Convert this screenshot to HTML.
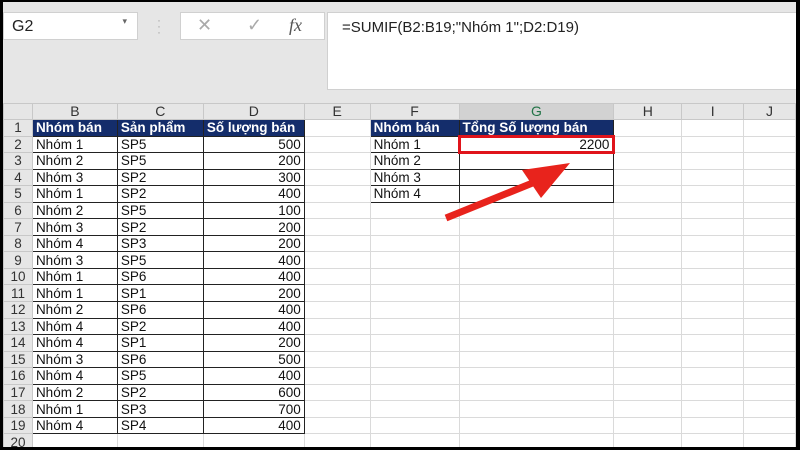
<!DOCTYPE html>
<html><head><meta charset="utf-8"><style>
*{margin:0;padding:0;box-sizing:border-box}
body{width:800px;height:450px;background:#000;position:relative;overflow:hidden;font-family:"Liberation Sans",Arial,sans-serif}
#wrap{position:absolute;left:3px;top:2px;width:793px;height:445px;background:#e6e6e6;overflow:hidden}
.box{position:absolute;background:#fff;border:1px solid #d0d0d0}
table{position:absolute;left:0;top:101px;border-collapse:collapse;table-layout:fixed;background:#fff}
tr{height:16.55px}
td{border:1px solid #dadada;font-size:13.5px;padding:0 3px;white-space:nowrap;overflow:hidden;line-height:13px;color:#111}
tr.h{height:16px}
tr.h td{background:#e6e6e6;text-align:center;color:#333;font-size:14px;border-color:#c8c8c8}
td.rh{background:#e6e6e6;text-align:center;color:#333;font-size:13.5px;padding:0;border-color:#c8c8c8}
td.hd{background:#142d6b;color:#fff;font-weight:bold;border:1px solid #222}
td.d{border:1px solid #222}
td.n{text-align:right}
</style></head><body><div id="wrap">
<div class="box" style="left:0;top:10px;width:135px;height:28px;font-size:16px;padding:5px 8px;color:#222">G2<span style="position:absolute;right:10px;top:3px;font-size:9px;color:#666">▾</span></div>
<div style="position:absolute;left:154px;top:15px;color:#aaa;font-size:12px;line-height:6px">·<br>·<br>·</div>
<div class="box" style="left:177px;top:10px;width:145px;height:28px;color:#aaa;font-size:18px">
<span style="position:absolute;left:16px;top:2px">✕</span><span style="position:absolute;left:66px;top:2px">✓</span><span style="position:absolute;left:108px;top:2px;font-family:'Liberation Serif',serif;font-style:italic;color:#555">fx</span></div>
<div class="box" style="left:324px;top:10px;width:470px;height:78px;font-size:15px;padding:6px 14px;color:#222">=SUMIF(B2:B19;"Nhóm 1";D2:D19)</div>
<table>
<colgroup><col style="width:29px"><col style="width:85px"><col style="width:86px"><col style="width:101px"><col style="width:66px"><col style="width:89px"><col style="width:155px"><col style="width:68px"><col style="width:62px"><col style="width:52px"></colgroup>
<tr class="h"><td></td><td>B</td><td>C</td><td>D</td><td>E</td><td>F</td><td style="background:#d2d2d2;color:#217346">G</td><td>H</td><td>I</td><td>J</td></tr>
<tr><td class="rh">1</td><td class="hd">Nhóm bán</td><td class="hd">Sản phẩm</td><td class="hd">Số lượng bán</td><td></td><td class="hd">Nhóm bán</td><td class="hd">Tổng Số lượng bán</td><td></td><td></td><td></td></tr>
<tr><td class="rh">2</td><td class="d">Nhóm 1</td><td class="d">SP5</td><td class="d n">500</td><td></td><td class="d">Nhóm 1</td><td class="d n" style="border:3px solid #e0141b">2200</td><td></td><td></td><td></td></tr>
<tr><td class="rh">3</td><td class="d">Nhóm 2</td><td class="d">SP5</td><td class="d n">200</td><td></td><td class="d">Nhóm 2</td><td class="d"></td><td></td><td></td><td></td></tr>
<tr><td class="rh">4</td><td class="d">Nhóm 3</td><td class="d">SP2</td><td class="d n">300</td><td></td><td class="d">Nhóm 3</td><td class="d"></td><td></td><td></td><td></td></tr>
<tr><td class="rh">5</td><td class="d">Nhóm 1</td><td class="d">SP2</td><td class="d n">400</td><td></td><td class="d">Nhóm 4</td><td class="d"></td><td></td><td></td><td></td></tr>
<tr><td class="rh">6</td><td class="d">Nhóm 2</td><td class="d">SP5</td><td class="d n">100</td><td></td><td></td><td></td><td></td><td></td><td></td></tr>
<tr><td class="rh">7</td><td class="d">Nhóm 3</td><td class="d">SP2</td><td class="d n">200</td><td></td><td></td><td></td><td></td><td></td><td></td></tr>
<tr><td class="rh">8</td><td class="d">Nhóm 4</td><td class="d">SP3</td><td class="d n">200</td><td></td><td></td><td></td><td></td><td></td><td></td></tr>
<tr><td class="rh">9</td><td class="d">Nhóm 3</td><td class="d">SP5</td><td class="d n">400</td><td></td><td></td><td></td><td></td><td></td><td></td></tr>
<tr><td class="rh">10</td><td class="d">Nhóm 1</td><td class="d">SP6</td><td class="d n">400</td><td></td><td></td><td></td><td></td><td></td><td></td></tr>
<tr><td class="rh">11</td><td class="d">Nhóm 1</td><td class="d">SP1</td><td class="d n">200</td><td></td><td></td><td></td><td></td><td></td><td></td></tr>
<tr><td class="rh">12</td><td class="d">Nhóm 2</td><td class="d">SP6</td><td class="d n">400</td><td></td><td></td><td></td><td></td><td></td><td></td></tr>
<tr><td class="rh">13</td><td class="d">Nhóm 4</td><td class="d">SP2</td><td class="d n">400</td><td></td><td></td><td></td><td></td><td></td><td></td></tr>
<tr><td class="rh">14</td><td class="d">Nhóm 4</td><td class="d">SP1</td><td class="d n">200</td><td></td><td></td><td></td><td></td><td></td><td></td></tr>
<tr><td class="rh">15</td><td class="d">Nhóm 3</td><td class="d">SP6</td><td class="d n">500</td><td></td><td></td><td></td><td></td><td></td><td></td></tr>
<tr><td class="rh">16</td><td class="d">Nhóm 4</td><td class="d">SP5</td><td class="d n">400</td><td></td><td></td><td></td><td></td><td></td><td></td></tr>
<tr><td class="rh">17</td><td class="d">Nhóm 2</td><td class="d">SP2</td><td class="d n">600</td><td></td><td></td><td></td><td></td><td></td><td></td></tr>
<tr><td class="rh">18</td><td class="d">Nhóm 1</td><td class="d">SP3</td><td class="d n">700</td><td></td><td></td><td></td><td></td><td></td><td></td></tr>
<tr><td class="rh">19</td><td class="d">Nhóm 4</td><td class="d">SP4</td><td class="d n">400</td><td></td><td></td><td></td><td></td><td></td><td></td></tr>
<tr><td class="rh">20</td><td></td><td></td><td></td><td></td><td></td><td></td><td></td><td></td><td></td></tr>
</table>
<svg style="position:absolute;left:0;top:0" width="793" height="445"><g transform="translate(-3,-2)">
<line x1="446" y1="218" x2="535" y2="182" stroke="#e8231c" stroke-width="7"/>
<polygon points="570,163 522,170 541,198" fill="#e8231c"/></g></svg>
</div></body></html>
